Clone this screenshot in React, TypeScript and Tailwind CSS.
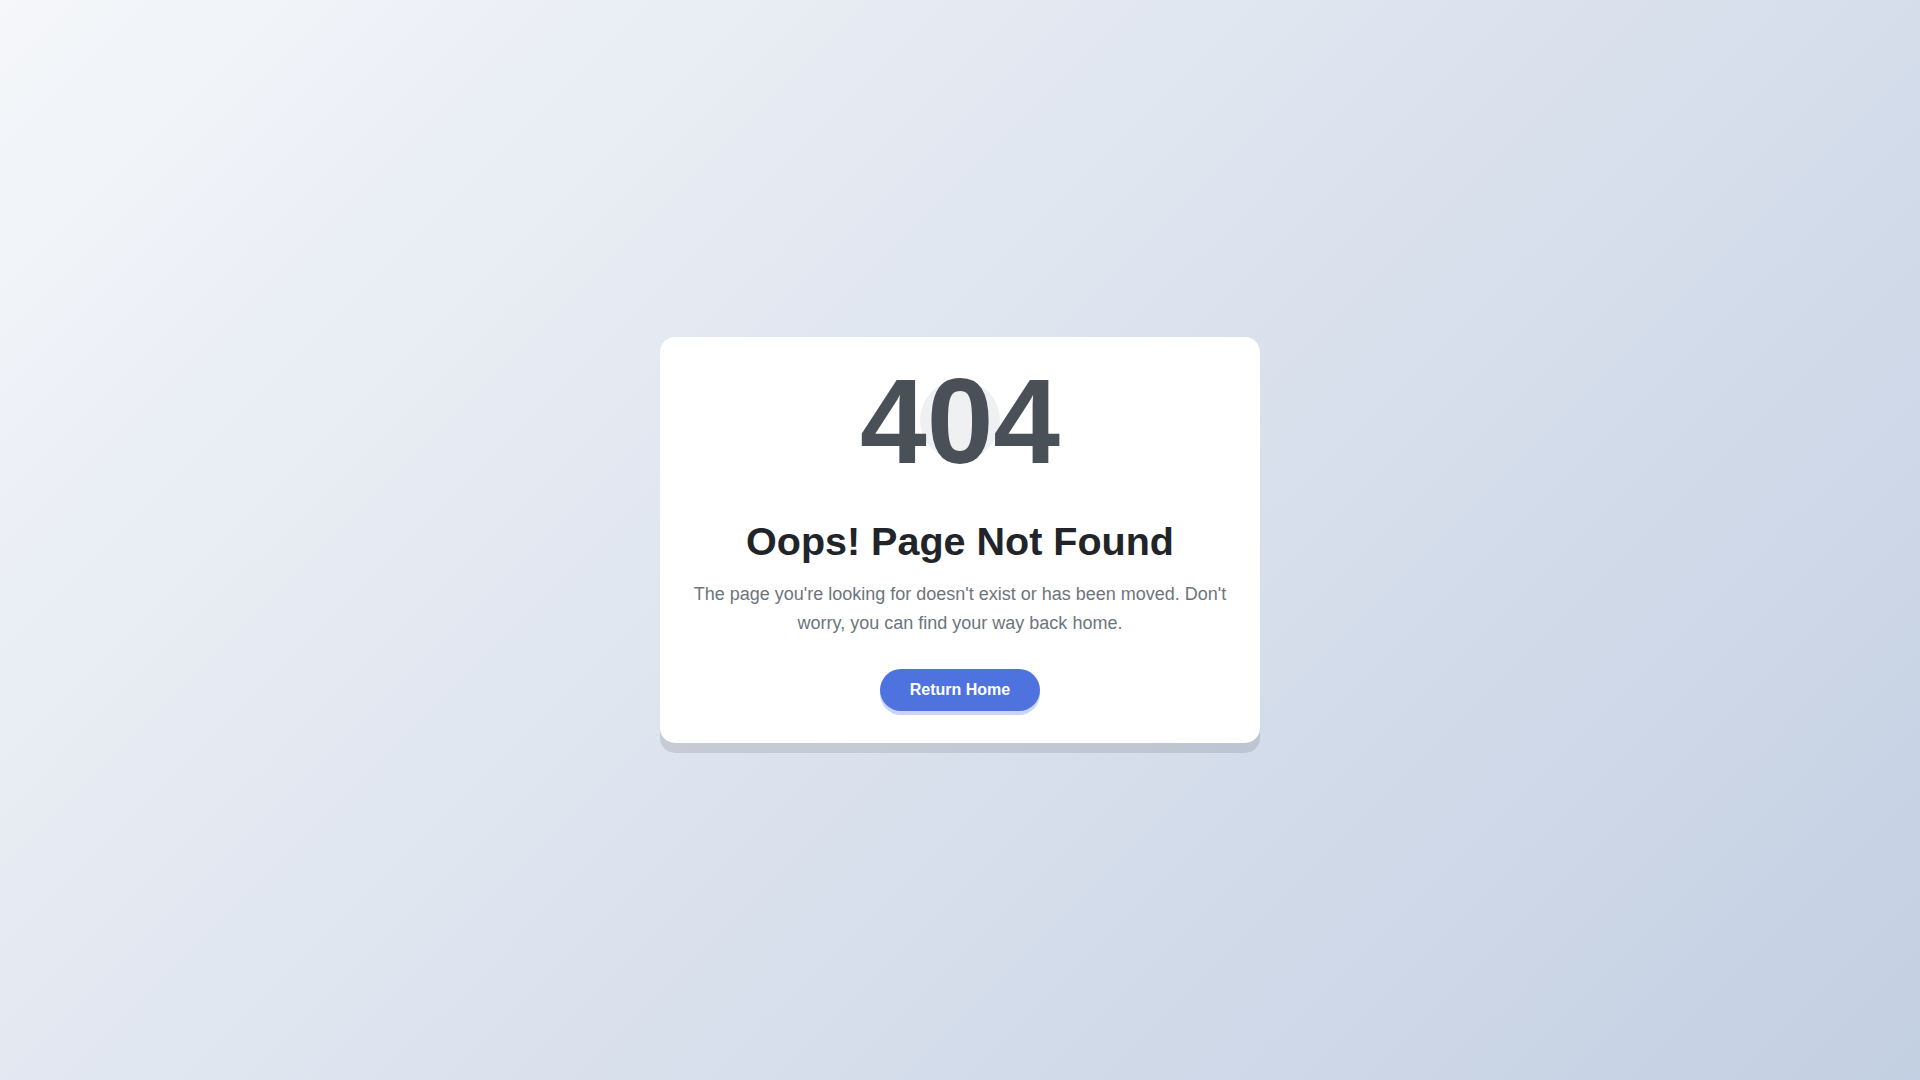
import React from "react";

export default function App() {
  return (
    <div
      className="min-h-screen w-full flex items-center justify-center bg-linear-135 from-[#f5f7fa] to-[#c3cfe2]"
      style={{ fontFamily: '"Liberation Sans", Arial, sans-serif' }}
    >
      <div className="w-[600px] bg-white rounded-[15px] shadow-[0_10px_0_rgba(0,0,0,0.1)] px-8 pt-6 pb-8 flex flex-col items-center text-center">
        <div className="relative">
          <div className="absolute left-1/2 top-[59px] -translate-x-1/2 -translate-y-1/2 w-[80px] h-[80px] rounded-full bg-[#eff0f2]" />
          <h1 className="relative text-[120px] leading-none font-bold text-[#495057]">404</h1>
        </div>
        <h2 className="mt-9 text-[39.5px] leading-[48px] font-bold text-[#212529]">Oops! Page Not Found</h2>
        <p className="mt-[15px] text-[18px] leading-[1.6] text-[#6c757d]">
          The page you're looking for doesn't exist or has been moved. Don't worry, you can find your way back home.
        </p>
        <a
          href="#"
          className="mt-[31px] inline-block rounded-full bg-[#4e73df] px-[30px] py-3 text-[16px] leading-[18px] font-bold text-white shadow-[0_4px_0_rgba(78,115,223,0.3)]"
        >
          Return Home
        </a>
      </div>
    </div>
  );
}
